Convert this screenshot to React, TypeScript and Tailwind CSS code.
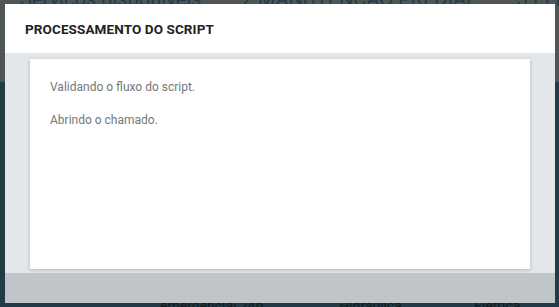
export default function App() {
  return (
    <div className="relative w-[559px] h-[307px] overflow-hidden bg-[#223b47] font-['Roboto',sans-serif]">
      {/* page behind the overlay */}
      <div className="flex flex-col h-full">
        <div className="h-[98px] bg-[#4f5455] flex gap-10 px-5 -mt-[16px] text-[20px] text-[#1f3d4d] whitespace-nowrap">
          <span>Serviços disponíveis</span>
          <span>2 MANUTENÇÃO PREDIAL</span>
          <span>3 ELÉTRICA</span>
        </div>
        <div className="flex-1 flex items-end gap-[72px] pl-[160px] -mb-[10px] text-[14px] text-[#0e1a20] whitespace-nowrap">
          <span>emergencial 24h.</span>
          <span>Hidráulica</span>
          <span>Elétrica</span>
        </div>
      </div>

      {/* modal */}
      <div className="absolute left-[5px] top-[4px] w-[550px] h-[299px] flex flex-col">
        <div className="h-[49px] bg-white flex items-center pl-[20px] pt-[1px]">
          <h2 className="text-[13.5px] font-bold text-[#222] tracking-[0.1px]">PROCESSAMENTO DO SCRIPT</h2>
        </div>
        <div className="flex-1 bg-[#e3e7ea] px-[25px] pt-[6px] pb-[4px]">
          <div className="h-full bg-white shadow-[0_1px_4px_rgba(0,0,0,0.22)] px-[20px] pt-[19px] text-[12px] text-[#777]">
            <p className="leading-[18px]">Validando o fluxo do script.</p>
            <p className="leading-[18px] mt-[15px]">Abrindo o chamado.</p>
          </div>
        </div>
        <div className="h-[30px] bg-[#bfc5c8]" />
      </div>
    </div>
  );
}
